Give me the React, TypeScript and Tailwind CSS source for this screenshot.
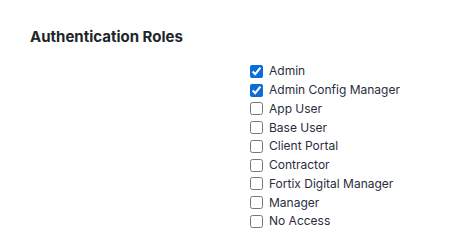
import React from "react";

const roles = [
  { name: "Admin", checked: true },
  { name: "Admin Config Manager", checked: true },
  { name: "App User", checked: false },
  { name: "Base User", checked: false },
  { name: "Client Portal", checked: false },
  { name: "Contractor", checked: false },
  { name: "Fortix Digital Manager", checked: false },
  { name: "Manager", checked: false },
  { name: "No Access", checked: false },
];

const App = () => {
  return (
    <div className="w-[450px] h-[248px] bg-white px-[30px] pt-[27px] font-['Inter',sans-serif] text-[#212529]">
      <h2 className="text-[15px] leading-[20px] font-bold">Authentication Roles</h2>
      <div className="flex mt-[15px]">
        <div className="w-[220px] shrink-0" />
        <div className="flex flex-col text-[#2a2d3e]">
          {roles.map((role, idx) => (
            <label key={idx} className="flex items-center h-[18.75px] text-[12px] gap-[6px]">
              <input
                type="checkbox"
                defaultChecked={role.checked}
                className="m-0 w-[13px] h-[13px] accent-[#0b6bd9]"
              />
              <span>{role.name}</span>
            </label>
          ))}
        </div>
      </div>
    </div>
  );
};

export default App;
